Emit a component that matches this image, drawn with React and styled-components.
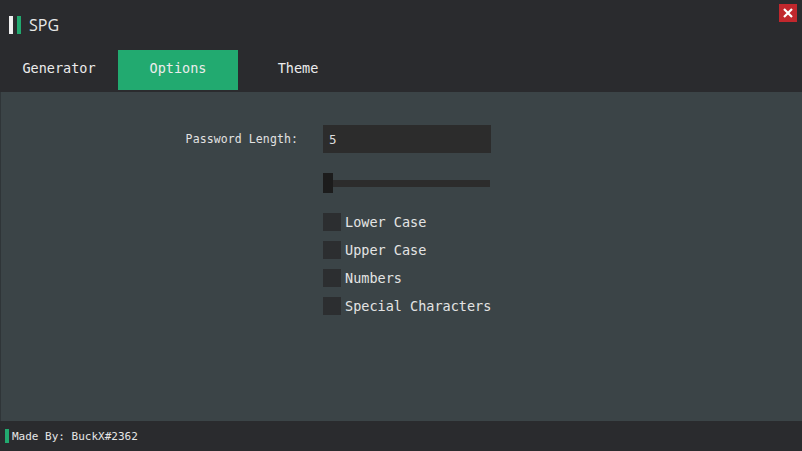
import React from 'react';
import styled, { createGlobalStyle } from 'styled-components';

const Global = createGlobalStyle`
  html, body { margin: 0; padding: 0; background: #2a2b2e; }
  * { box-sizing: border-box; }
`;

const Window = styled.div`
  width: 802px;
  height: 451px;
  display: flex;
  flex-direction: column;
  background: #2a2b2e;
  color: #e6e6e6;
  font-family: "DejaVu Sans Mono", "Liberation Mono", monospace;
  position: relative;
  overflow: hidden;
`;

const TitleBar = styled.div`
  height: 50px;
  display: flex;
  align-items: center;
  padding-left: 9px;
  gap: 4px;
`;

const Bar = styled.div`
  width: 4px;
  height: 18px;
  background: ${p => p.color};
`;

const Title = styled.div`
  margin-left: 4px;
  font-family: "Open Sans", "Noto Sans", sans-serif;
  font-size: 16px;
  color: #e8e8e8;
  margin-top: -1px;
`;

const Close = styled.button`
  position: absolute;
  top: 4px;
  right: 5px;
  width: 18px;
  height: 18px;
  border: 0;
  padding: 0;
  background: #c1272d;
  display: flex;
  align-items: center;
  justify-content: center;
`;

const Tabs = styled.div`
  height: 40px;
  display: flex;
`;

const Tab = styled.div`
  width: ${p => p.w || 120}px;
  display: flex;
  align-items: center;
  justify-content: center;
  padding-bottom: 4px;
  font-size: 13.5px;
  color: #ececec;
  background: ${p => (p.active ? '#22aa70' : 'transparent')};
`;

const Content = styled.div`
  flex: 1;
  margin-top: 2px;
  background: #3b4447;
  box-shadow: inset 1px 0 0 #2f3538;
  display: grid;
  grid-template-columns: 323px 168px;
  grid-auto-rows: min-content;
  padding-top: 33px;
  align-content: start;
`;

const Label = styled.div`
  font-size: 11.5px;
  color: #e2e2e2;
  text-align: right;
  padding-right: 25px;
  align-self: center;
  letter-spacing: 0.1px;
`;

const Input = styled.div`
  height: 28px;
  background: #2c2c2c;
  font-size: 12.5px;
  color: #dcdcdc;
  display: flex;
  align-items: center;
  padding-left: 6px;
`;

const SliderRow = styled.div`
  grid-column: 2;
  margin-top: 20px;
  height: 20px;
  position: relative;
  display: flex;
  align-items: center;
`;

const Track = styled.div`
  width: 167px;
  height: 7px;
  background: #2c2c2c;
`;

const Thumb = styled.div`
  position: absolute;
  left: 0;
  top: 0;
  width: 10px;
  height: 20px;
  background: #1c1c1c;
`;

const Checks = styled.div`
  grid-column: 2;
  margin-top: 20px;
  display: flex;
  flex-direction: column;
  gap: 10px;
  white-space: nowrap;
`;

const CheckRow = styled.label`
  display: flex;
  align-items: center;
  gap: 4px;
  font-size: 13.5px;
  color: #e4e4e4;
  height: 18px;
`;

const Box = styled.span`
  width: 18px;
  height: 18px;
  background: #2c2e30;
  flex-shrink: 0;
`;

const Footer = styled.div`
  height: 30px;
  display: flex;
  align-items: center;
  padding-left: 5px;
  gap: 3px;
  font-size: 11px;
  color: #e6e6e6;
`;

const options = ['Lower Case', 'Upper Case', 'Numbers', 'Special Characters'];

export default function App() {
  return (
    <Window>
      <Global />
      <TitleBar>
        <Bar color="#f0f0f0" />
        <Bar color="#22aa70" />
        <Title>SPG</Title>
      </TitleBar>
      <Close>
        <svg width="12" height="12" viewBox="0 0 12 12">
          <path d="M2 2 L10 10 M10 2 L2 10" stroke="#fff" strokeWidth="2.2" />
        </svg>
      </Close>
      <Tabs>
        <Tab w={118}>Generator</Tab>
        <Tab active>Options</Tab>
        <Tab>Theme</Tab>
      </Tabs>
      <Content>
        <Label>Password Length:</Label>
        <Input>5</Input>
        <SliderRow>
          <Track />
          <Thumb />
        </SliderRow>
        <Checks>
          {options.map(o => (
            <CheckRow key={o}>
              <Box />
              {o}
            </CheckRow>
          ))}
        </Checks>
      </Content>
      <Footer>
        <Bar color="#22aa70" style={{ height: 14 }} />
        Made By: BuckX#2362
      </Footer>
    </Window>
  );
}
